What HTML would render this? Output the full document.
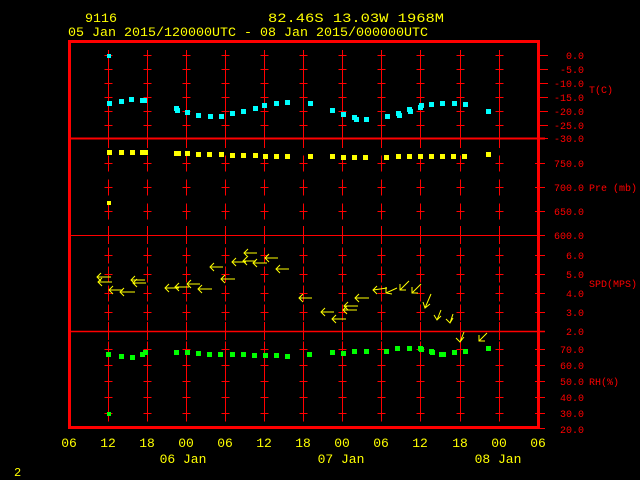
<!DOCTYPE html>
<html><head><meta charset="utf-8"><style>
html,body{margin:0;padding:0;background:#000;width:640px;height:480px;overflow:hidden}
svg{display:block}
text{font-family:"Liberation Mono",monospace}
</style></head><body>
<svg width="640" height="480" viewBox="0 0 640 480" xmlns="http://www.w3.org/2000/svg">
<defs>
<path id="c" d="M-4 0H4M0 -8V8" stroke="#f00" stroke-width="1"/>
<path id="s" d="M0 -5V5" stroke="#f00" stroke-width="1"/>
</defs>
<rect width="640" height="480" fill="#000"/>
<!-- titles -->
<g fill="#ff0" font-size="13">
<text x="85" y="22" textLength="32" lengthAdjust="spacingAndGlyphs">9116</text>
<text x="268" y="22" textLength="176" lengthAdjust="spacingAndGlyphs">82.46S   13.03W   1968M</text>
<text x="68" y="36" textLength="360" lengthAdjust="spacingAndGlyphs">05 Jan 2015/120000UTC - 08 Jan 2015/000000UTC</text>
</g>
<!-- T panel vertical lines -->
<g stroke="#f00" stroke-width="1">
<path d="M108.5 50V138M147.5 50V138M186.5 50V138M225.5 50V138M264.5 50V138M303.5 50V138M342.5 50V138M381.5 50V138M420.5 50V138M460.5 50V138M499.5 50V138"/>
</g>
<g id="tc">
<g transform="translate(108.5,0)"><path d="M-4 55.5H4M-4 69.5H4M-4 83.5H4M-4 97.5H4M-4 111.5H4M-4 125.5H4" stroke="#f00"/></g>
</g>
<use href="#tc" x="39"/><use href="#tc" x="78"/><use href="#tc" x="117"/><use href="#tc" x="156"/><use href="#tc" x="195"/><use href="#tc" x="234"/><use href="#tc" x="273"/><use href="#tc" x="312"/><use href="#tc" x="352"/><use href="#tc" x="391"/>
<!-- other panel column pattern -->
<g id="col" transform="translate(108.5,0)">
<use href="#s" y="143"/><use href="#c" y="163.5"/><use href="#c" y="187.5"/><use href="#c" y="211.5"/><use href="#s" y="231"/>
<use href="#s" y="239"/><use href="#c" y="255.5"/><use href="#c" y="274.5"/><use href="#c" y="293.5"/><use href="#c" y="312.5"/><use href="#s" y="327"/>
<use href="#s" y="335"/><use href="#c" y="349.5"/><use href="#c" y="365.5"/><use href="#c" y="381.5"/><use href="#c" y="397.5"/><use href="#c" y="413.5"/>
</g>
<use href="#col" x="39"/><use href="#col" x="78"/><use href="#col" x="117"/><use href="#col" x="156"/><use href="#col" x="195"/><use href="#col" x="234"/><use href="#col" x="273"/><use href="#col" x="312"/><use href="#col" x="352"/><use href="#col" x="391"/>
<!-- dividers -->
<g stroke="#f00">
<path d="M70 138.5H545" stroke-width="2"/>
<path d="M70 235.5H545" stroke-width="1"/>
<path d="M70 331.5H545" stroke-width="1.5"/>
</g>
<!-- frame -->
<rect x="69.5" y="41.5" width="469" height="386" fill="none" stroke="#f00" stroke-width="3"/>
<!-- right ticks -->
<g stroke="#f00">
<path d="M538 55.5H548M538 69.5H548M538 83.5H548M538 97.5H548M538 111.5H548M538 125.5H548M538 138.5H548
M535 163.5H545M535 187.5H545M535 211.5H545M535 235.5H545
M535 255.5H545M535 274.5H545M535 293.5H545M535 312.5H545M535 331.5H545
M535 349.5H545M535 365.5H545M535 381.5H545M535 397.5H545M535 413.5H545M535 428.5H545"/>
</g>
<!-- right labels -->
<g fill="#f00" font-size="10" text-anchor="end">
<text x="584" y="59">0.0</text><text x="584" y="73">-5.0</text><text x="584" y="87">-10.0</text><text x="584" y="101">-15.0</text><text x="584" y="115">-20.0</text><text x="584" y="129">-25.0</text><text x="584" y="142">-30.0</text>
<text x="584" y="167">750.0</text><text x="584" y="191">700.0</text><text x="584" y="215">650.0</text><text x="584" y="239">600.0</text>
<text x="584" y="259">6.0</text><text x="584" y="278">5.0</text><text x="584" y="297">4.0</text><text x="584" y="316">3.0</text><text x="584" y="335">2.0</text>
<text x="584" y="353">70.0</text><text x="584" y="369">60.0</text><text x="584" y="385">50.0</text><text x="584" y="401">40.0</text><text x="584" y="417">30.0</text><text x="584" y="433">20.0</text>
</g>
<g fill="#f00" font-size="10">
<text x="589" y="93">T(C)</text>
<text x="589" y="191">Pre (mb)</text>
<text x="589" y="287">SPD(MPS)</text>
<text x="589" y="385">RH(%)</text>
</g>
<!-- bottom labels -->
<g fill="#ff0" font-size="13" text-anchor="middle">
<text x="69" y="447">06</text><text x="108" y="447">12</text><text x="147" y="447">18</text><text x="186" y="447">00</text><text x="225" y="447">06</text><text x="264" y="447">12</text><text x="303" y="447">18</text><text x="342" y="447">00</text><text x="381" y="447">06</text><text x="420" y="447">12</text><text x="460" y="447">18</text><text x="499" y="447">00</text><text x="538" y="447">06</text>
<text x="183" y="463">06 Jan</text><text x="341" y="463">07 Jan</text><text x="498" y="463">08 Jan</text>
</g>
<text x="14" y="476" fill="#ff0" font-size="12">2</text>
<!-- T points -->
<g fill="#0ff">
<rect x="107" y="54" width="4" height="4"/>
<rect x="107" y="101" width="5" height="5"/><rect x="119" y="99" width="5" height="5"/><rect x="129" y="97" width="5" height="5"/><rect x="140" y="98" width="5" height="5"/><rect x="142" y="98" width="5" height="5"/>
<rect x="174" y="106" width="5" height="5"/><rect x="175" y="108" width="5" height="5"/><rect x="185" y="110" width="5" height="5"/><rect x="196" y="113" width="5" height="5"/><rect x="208" y="114" width="5" height="5"/><rect x="219" y="114" width="5" height="5"/><rect x="230" y="111" width="5" height="5"/><rect x="241" y="109" width="5" height="5"/><rect x="253" y="106" width="5" height="5"/><rect x="262" y="103" width="5" height="5"/><rect x="274" y="101" width="5" height="5"/><rect x="285" y="100" width="5" height="5"/>
<rect x="308" y="101" width="5" height="5"/><rect x="330" y="108" width="5" height="5"/><rect x="341" y="112" width="5" height="5"/><rect x="352" y="115" width="5" height="5"/><rect x="354" y="117" width="5" height="5"/><rect x="364" y="117" width="5" height="5"/><rect x="385" y="114" width="5" height="5"/><rect x="396" y="111" width="5" height="5"/><rect x="397" y="113" width="5" height="5"/><rect x="407" y="107" width="5" height="5"/><rect x="408" y="109" width="5" height="5"/><rect x="418" y="105" width="5" height="5"/><rect x="419" y="103" width="5" height="5"/><rect x="429" y="102" width="5" height="5"/><rect x="440" y="101" width="5" height="5"/><rect x="452" y="101" width="5" height="5"/><rect x="463" y="102" width="5" height="5"/><rect x="486" y="109" width="5" height="5"/>
</g>
<!-- Pressure points -->
<g fill="#ff0">
<rect x="107" y="201" width="4" height="4"/>
<rect x="107" y="150" width="5" height="5"/><rect x="119" y="150" width="5" height="5"/><rect x="130" y="150" width="5" height="5"/><rect x="140" y="150" width="5" height="5"/><rect x="143" y="150" width="5" height="5"/>
<rect x="174" y="151" width="5" height="5"/><rect x="176" y="151" width="5" height="5"/><rect x="185" y="151" width="5" height="5"/><rect x="196" y="152" width="5" height="5"/><rect x="207" y="152" width="5" height="5"/><rect x="219" y="152" width="5" height="5"/><rect x="230" y="153" width="5" height="5"/><rect x="241" y="153" width="5" height="5"/><rect x="253" y="153" width="5" height="5"/><rect x="263" y="154" width="5" height="5"/><rect x="274" y="154" width="5" height="5"/><rect x="285" y="154" width="5" height="5"/>
<rect x="308" y="154" width="5" height="5"/><rect x="330" y="154" width="5" height="5"/><rect x="341" y="155" width="5" height="5"/><rect x="352" y="155" width="5" height="5"/><rect x="363" y="155" width="5" height="5"/><rect x="384" y="155" width="5" height="5"/><rect x="396" y="154" width="5" height="5"/><rect x="407" y="154" width="5" height="5"/><rect x="418" y="154" width="5" height="5"/><rect x="429" y="154" width="5" height="5"/><rect x="440" y="154" width="5" height="5"/><rect x="451" y="154" width="5" height="5"/><rect x="462" y="154" width="5" height="5"/><rect x="486" y="152" width="5" height="5"/>
</g>
<!-- RH points -->
<g fill="#0f0">
<rect x="107" y="412" width="4" height="4"/>
<rect x="106" y="352" width="5" height="5"/><rect x="119" y="354" width="5" height="5"/><rect x="130" y="355" width="5" height="5"/><rect x="140" y="352" width="5" height="5"/><rect x="143" y="350" width="5" height="5"/>
<rect x="174" y="350" width="5" height="5"/><rect x="185" y="350" width="5" height="5"/><rect x="196" y="351" width="5" height="5"/><rect x="207" y="352" width="5" height="5"/><rect x="218" y="352" width="5" height="5"/><rect x="230" y="352" width="5" height="5"/><rect x="241" y="352" width="5" height="5"/><rect x="252" y="353" width="5" height="5"/><rect x="263" y="353" width="5" height="5"/><rect x="274" y="353" width="5" height="5"/><rect x="285" y="354" width="5" height="5"/>
<rect x="307" y="352" width="5" height="5"/><rect x="330" y="350" width="5" height="5"/><rect x="341" y="351" width="5" height="5"/><rect x="352" y="349" width="5" height="5"/><rect x="364" y="349" width="5" height="5"/><rect x="384" y="349" width="5" height="5"/><rect x="395" y="346" width="5" height="5"/><rect x="407" y="346" width="5" height="5"/><rect x="418" y="346" width="5" height="5"/><rect x="419" y="347" width="5" height="5"/><rect x="429" y="349" width="5" height="5"/><rect x="430" y="350" width="5" height="5"/><rect x="439" y="352" width="5" height="5"/><rect x="441" y="352" width="5" height="5"/><rect x="452" y="350" width="5" height="5"/><rect x="463" y="349" width="5" height="5"/><rect x="486" y="346" width="5" height="5"/>
</g>
<!-- wind arrows -->
<g stroke="#ff0" stroke-width="1" fill="none">
<path d="M97 277h14M101 273L97 277L101 281"/>
<path d="M98 282h14M102 278L98 282L102 286"/>
<path d="M109 290h14M113 286L109 290L113 294"/>
<path d="M120 292h15M124 288L120 292L124 296"/>
<path d="M131 280h14M135 276L131 280L135 284"/>
<path d="M133 283h13M137 279L133 283L137 287"/>
<path d="M165 288h14M169 284L165 288L169 292"/>
<path d="M175 287h14M179 283L175 287L179 291"/>
<path d="M187 284h13M191 280L187 284L191 288"/>
<path d="M198 289h14M202 285L198 289L202 293"/>
<path d="M210 267h13M214 263L210 267L214 271"/>
<path d="M221 279h14M225 275L221 279L225 283"/>
<path d="M232 262h14M236 258L232 262L236 266"/>
<path d="M243 261h13M247 257L243 261L247 265"/>
<path d="M244 253h13M248 249L244 253L248 257"/>
<path d="M253 263h14M257 259L253 263L257 267"/>
<path d="M265 258h13M269 254L265 258L269 262"/>
<path d="M276 269h13M280 265L276 269L280 273"/>
<path d="M299 298h13M303 294L299 298L303 302"/>
<path d="M321 312h13M325 308L321 312L325 316"/>
<path d="M332 319h14M336 315L332 319L336 323"/>
<path d="M343 310h14M347 306L343 310L347 314"/>
<path d="M344 306h14M348 302L344 306L348 310"/>
<path d="M355 298h14M359 294L355 298L359 302"/>
<path d="M373 290L387 288M377 286L373 290L377 294"/>
<path d="M386 293L397 288M386 287L386 293L392 294"/>
<path d="M400 290L409 281M400 284L400 290L406 290"/>
<path d="M412 293L421 284M412 287L412 293L418 293"/>
<path d="M425 308L431 294M423 302L425 308L430 304"/>
<path d="M437 320L441 310M434 315L437 320L441 316"/>
<path d="M450 323L453 314M446 319L450 323L453 318"/>
<path d="M460 342L464 332M456 338L460 342L464 337"/>
<path d="M479 341L487 333M479 335L479 341L485 341"/>
</g>
</svg>
</body></html>
